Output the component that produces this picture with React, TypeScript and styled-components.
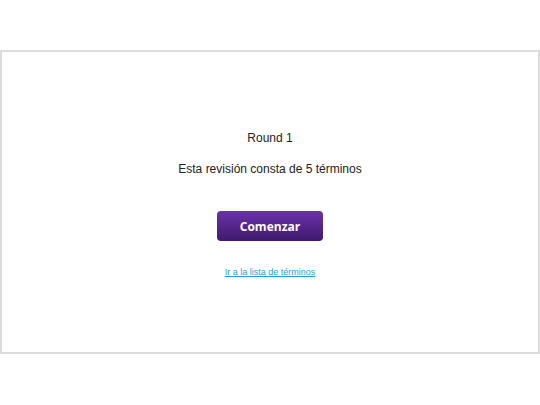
import React from 'react';
import styled, { createGlobalStyle } from "styled-components";

const GlobalStyle = createGlobalStyle`
  html, body {
    margin: 0;
    padding: 0;
    background: #ffffff;
  }
`

const Page = styled.div`
  padding-top: 50px;
`

const Frame = styled.div`
  box-sizing: border-box;
  height: 304px;
  padding-top: 78px;
  border: 2px solid #dcdcdc;
  display: flex;
  flex-direction: column;
  align-items: center;
  font-family: "Liberation Sans", Arial, sans-serif;
  color: #222;
`

const Title = styled.div`
  font-size: 12px;
  line-height: 16px;
`

const Subtitle = styled.div`
  font-size: 12px;
  line-height: 16px;
  margin-top: 15px;
`

const StartButton = styled.button`
  margin-top: 34px;
  width: 106px;
  height: 30px;
  padding: 0;
  border: none;
  border-radius: 4px;
  background: linear-gradient(to bottom, #6b31ab 0%, #3f1a6c 100%);
  color: #ffffff;
  font-family: "Open Sans", "Noto Sans", sans-serif;
  font-weight: 700;
  font-size: 12px;
  cursor: pointer;
`

const TermsLink = styled.a`
  margin-top: 25px;
  font-size: 9px;
  line-height: 12px;
  color: #1fa3dc;
  text-decoration: underline;
`

export default function App() {
    return (
        <Page>
            <GlobalStyle />
            <Frame>
                <Title>Round 1</Title>
                <Subtitle>Esta revisión consta de 5 términos</Subtitle>
                <StartButton>Comenzar</StartButton>
                <TermsLink href="#">Ir a la lista de términos</TermsLink>
            </Frame>
        </Page>
    )
}
